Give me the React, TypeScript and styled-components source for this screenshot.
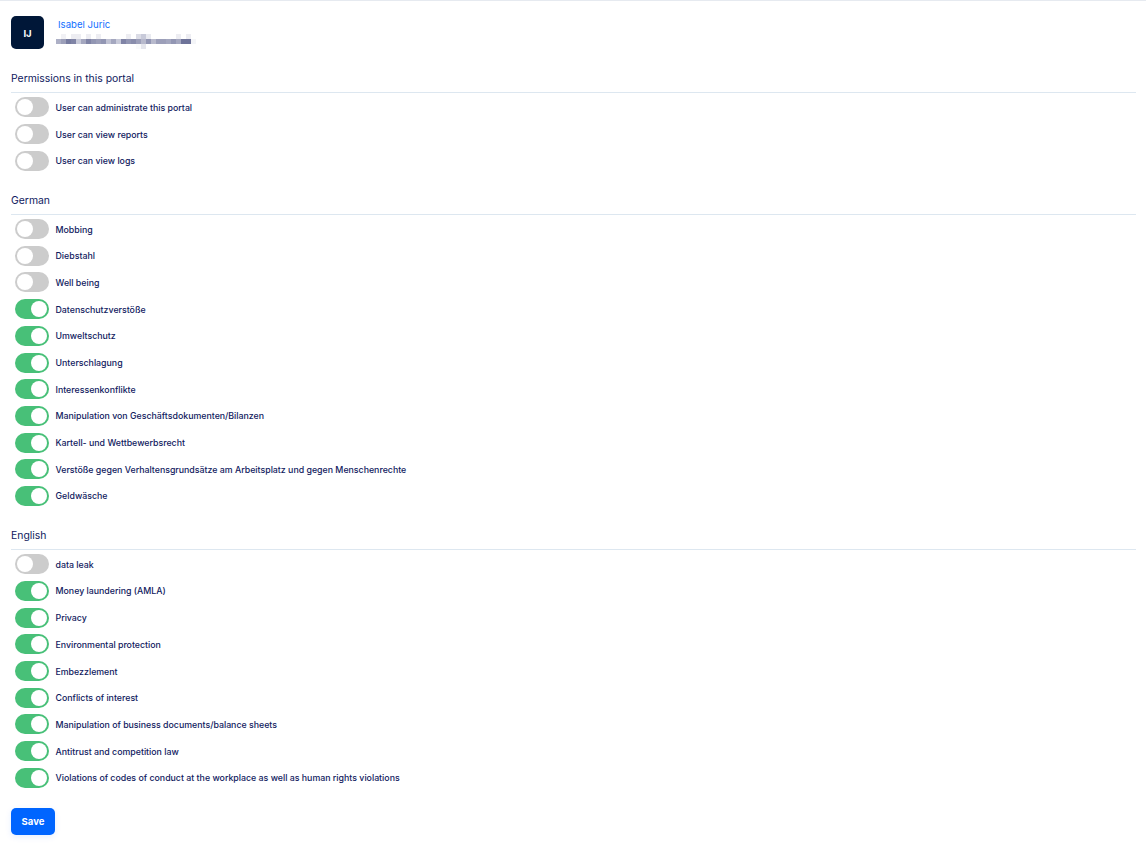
import React from "react";
import styled, { createGlobalStyle } from "styled-components";

const GlobalStyle = createGlobalStyle`
    html, body {
        margin: 0;
        padding: 0;
        background: #fff;
        font-family: Inter, "Liberation Sans", sans-serif;
    }
`;

type Item = { label: string; on: boolean };

const permissions: Item[] = [
    { label: "User can administrate this portal", on: false },
    { label: "User can view reports", on: false },
    { label: "User can view logs", on: false },
];

const german: Item[] = [
    { label: "Mobbing", on: false },
    { label: "Diebstahl", on: false },
    { label: "Well being", on: false },
    { label: "Datenschutzverstöße", on: true },
    { label: "Umweltschutz", on: true },
    { label: "Unterschlagung", on: true },
    { label: "Interessenkonflikte", on: true },
    { label: "Manipulation von Geschäftsdokumenten/Bilanzen", on: true },
    { label: "Kartell- und Wettbewerbsrecht", on: true },
    { label: "Verstöße gegen Verhaltensgrundsätze am Arbeitsplatz und gegen Menschenrechte", on: true },
    { label: "Geldwäsche", on: true },
];

const english: Item[] = [
    { label: "data leak", on: false },
    { label: "Money laundering (AMLA)", on: true },
    { label: "Privacy", on: true },
    { label: "Environmental protection", on: true },
    { label: "Embezzlement", on: true },
    { label: "Conflicts of interest", on: true },
    { label: "Manipulation of business documents/balance sheets", on: true },
    { label: "Antitrust and competition law", on: true },
    { label: "Violations of codes of conduct at the workplace as well as human rights violations", on: true },
];

const sections = [
    { title: "Permissions in this portal", items: permissions },
    { title: "German", items: german },
    { title: "English", items: english },
];

// opacity of each 5px block of the pixelated e-mail address
const blurMain = [0.45, 0.55, 0.75, 0.7, 0.3, 0.5, 0.7, 0.6, 0.55, 0.6, 0.35, 0.5, 0.3, 0.7, 0.6, 0.65, 0.55, 0.4, 0.6, 0.4, 0.55, 0.55, 0.5, 0.6, 0.5, 0.8, 0.8, 0.06];
const blurTop = [0, 0.08, 0, 0.1, 0.1, 0, 0.1, 0, 0.1, 0, 0, 0, 0, 0, 0.1, 0, 0.2, 0.3, 0.12, 0, 0, 0, 0, 0, 0.1, 0, 0.1, 0];
const blurBottom = [0, 0, 0, 0, 0, 0, 0, 0, 0, 0, 0, 0, 0, 0, 0, 0, 0.03, 0.15, 0, 0, 0, 0, 0, 0, 0, 0, 0, 0];

const App: React.FunctionComponent = () => (
    <Page>
        <GlobalStyle />
        <UserHeader>
            <Avatar>IJ</Avatar>
            <UserDetails>
                <UserName>Isabel Juric</UserName>
                <BlurredEmail width="140" height="15" viewBox="0 0 140 15">
                    {blurTop.map((opacity, i) => (
                        <rect key={i} x={i * 5} y="0" width="5" height="5" fill="#4a5080" opacity={opacity} />
                    ))}
                    {blurMain.map((opacity, i) => (
                        <rect key={i} x={i * 5} y="5" width="5" height="5" fill="#4a5080" opacity={opacity} />
                    ))}
                    {blurBottom.map((opacity, i) => (
                        <rect key={i} x={i * 5} y="10" width="5" height="5" fill="#4a5080" opacity={opacity} />
                    ))}
                </BlurredEmail>
            </UserDetails>
        </UserHeader>
        {sections.map(section => (
            <Section key={section.title}>
                <SectionTitle>{section.title}</SectionTitle>
                <Rows>
                    {section.items.map(item => (
                        <Row key={item.label}>
                            <Toggle on={item.on} />
                            <RowLabel>{item.label}</RowLabel>
                        </Row>
                    ))}
                </Rows>
            </Section>
        ))}
        <SaveButton>Save</SaveButton>
    </Page>
);

export default App;

const Page = styled.div`
    box-sizing: border-box;
    height: 847px;
    padding: 15px 10px 0 11px;
    border-top: 1px solid #e6eaf0;
    overflow: hidden;
`;

const UserHeader = styled.div`
    display: flex;
    height: 33px;
    margin-bottom: 21px;
`;

const Avatar = styled.div`
    box-sizing: border-box;
    width: 33px;
    height: 33px;
    padding-top: 1px;
    border-radius: 5px;
    background: #001738;
    color: #fff;
    font-size: 9.5px;
    font-weight: 700;
    display: flex;
    align-items: center;
    justify-content: center;
`;

const UserDetails = styled.div`
    margin-left: 12px;
    display: flex;
    flex-direction: column;
`;

const UserName = styled.div`
    margin-left: 2px;
    height: 18px;
    font-size: 9.6px;
    line-height: 18px;
    color: #0f6fff;
`;

const BlurredEmail = styled.svg`
    display: block;
`;

const Section = styled.section`
    margin-bottom: 20.95px;

    &:last-of-type {
        margin-bottom: 0;
    }
`;

const SectionTitle = styled.div`
    height: 22px;
    line-height: 18px;
    font-size: 10.4px;
    color: #10205e;
    border-bottom: 1px solid #dde7f0;
`;

const Rows = styled.div`
    padding: 4.4px 0 0 4px;
    display: flex;
    flex-direction: column;
    gap: 6.7px;
`;

const Row = styled.div`
    display: flex;
    align-items: center;
    height: 20px;
`;

const Toggle = styled.span<{ on: boolean }>`
    position: relative;
    display: block;
    flex: none;
    width: 34px;
    height: 20px;
    border-radius: 10px;
    background: ${props => (props.on ? "#48c078" : "#cccccc")};

    &::after {
        content: "";
        position: absolute;
        top: 2px;
        left: ${props => (props.on ? "16px" : "2px")};
        width: 16px;
        height: 16px;
        border-radius: 50%;
        background: #fff;
    }
`;

const RowLabel = styled.span`
    margin-left: 6.5px;
    font-size: 8.8px;
    font-weight: 500;
    color: #10205e;
    white-space: nowrap;
`;

const SaveButton = styled.button`
    display: block;
    width: 44px;
    height: 27px;
    margin-top: 20px;
    padding: 0;
    border: 0;
    border-radius: 5px;
    background: #0065ff;
    color: #fff;
    font-family: inherit;
    font-size: 9.5px;
    font-weight: 700;
    box-shadow: 0 2px 6px rgba(0, 101, 255, 0.1);
`;
